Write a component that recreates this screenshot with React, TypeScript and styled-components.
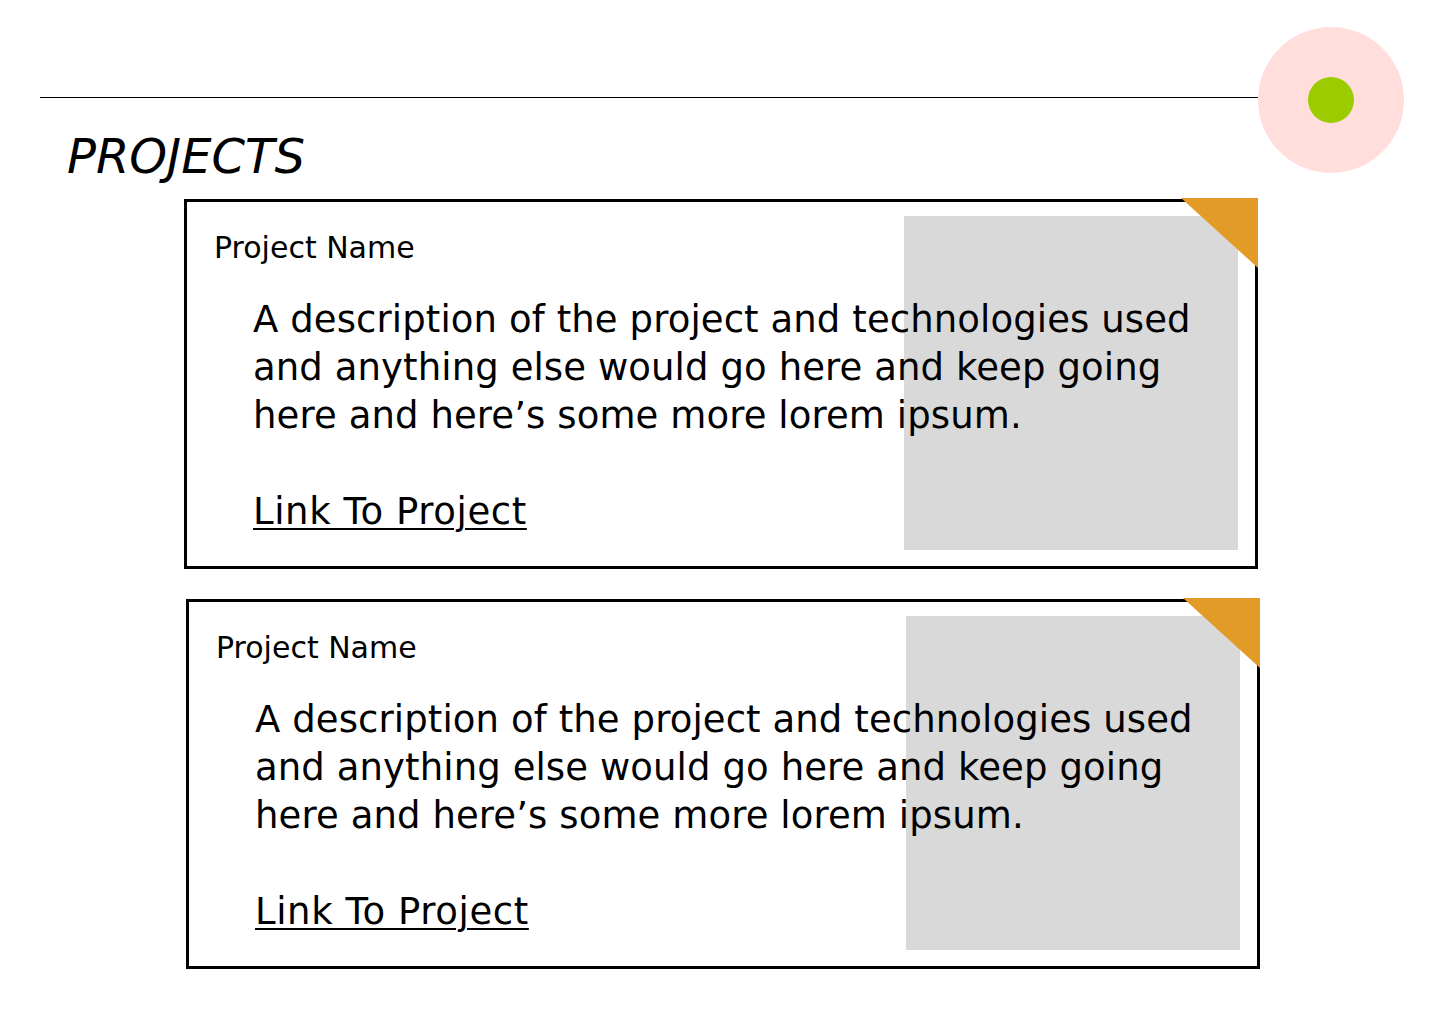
import styled, { createGlobalStyle } from "styled-components";

const GlobalStyle = createGlobalStyle`
    html, body {
        margin: 0;
        padding: 0;
        background: #ffffff;
    }
    body {
        font-family: "DejaVu Sans", "Liberation Sans", sans-serif;
        color: #000000;
    }
`;

const Page = styled.div`
    width: 1440px;
    min-height: 1024px;
    box-sizing: border-box;
    padding: 27px 36px 0 40px;
`;

const Header = styled.header`
    display: grid;
    grid-template-columns: 1fr 146px;
    align-items: start;
`;

const HeaderMain = styled.div`
    display: flex;
    flex-direction: column;
`;

const Rule = styled.hr`
    margin: 70px 0 0;
    border: none;
    height: 1px;
    background: #000000;
`;

const Title = styled.h1`
    margin: 34px 0 0 27px;
    font-size: 48px;
    line-height: 48px;
    font-style: italic;
    font-weight: 400;
`;

const Badge = styled.div`
    width: 146px;
    height: 146px;
    border-radius: 50%;
    background: #ffdedc;
    display: flex;
    align-items: center;
    justify-content: center;
`;

const Dot = styled.span`
    width: 46px;
    height: 46px;
    border-radius: 50%;
    background: #9acc00;
`;

const CardList = styled.section`
    display: flex;
    flex-direction: column;
    gap: 30px;
    margin-top: 19px;
`;

const Card = styled.article<{ $shift: number }>`
    position: relative;
    box-sizing: border-box;
    width: 1074px;
    height: 370px;
    margin-left: ${(p) => 144 + p.$shift}px;
    border: 3px solid #000000;
    padding: 28px 0 0 27px;
`;

const Preview = styled.div`
    position: absolute;
    top: 14px;
    right: 17px;
    width: 334px;
    height: 334px;
    background: #d9d9d9;
`;

const Corner = styled.div`
    position: absolute;
    top: -4px;
    right: -3px;
    width: 77px;
    height: 70px;
    background: #e39b27;
    clip-path: polygon(0 0, 100% 0, 100% 100%);
`;

const CardBody = styled.div`
    position: relative;
    display: flex;
    flex-direction: column;
`;

const Name = styled.h2`
    margin: 0;
    font-size: 30px;
    line-height: 36px;
    font-weight: 400;
`;

const Description = styled.p`
    margin: 30px 0 0 39px;
    width: 945px;
    font-size: 37px;
    line-height: 48px;
    letter-spacing: 0.1px;
`;

const ProjectLink = styled.a`
    align-self: flex-start;
    margin: 48px 0 0 39px;
    font-size: 37px;
    line-height: 48px;
    letter-spacing: 0.6px;
    color: #000000;
    text-decoration: underline;
    text-decoration-thickness: 2px;
    text-underline-offset: 4px;
`;

const projects = [
    {
        name: "Project Name",
        text: "A description of the project and technologies used and anything else would go here and keep going here and here\u2019s some more lorem ipsum.",
        shift: 0,
    },
    {
        name: "Project Name",
        text: "A description of the project and technologies used and anything else would go here and keep going here and here\u2019s some more lorem ipsum.",
        shift: 2,
    },
];

export default function App() {
    return (
        <Page>
            <GlobalStyle />
            <Header>
                <HeaderMain>
                    <Rule />
                    <Title>PROJECTS</Title>
                </HeaderMain>
                <Badge>
                    <Dot />
                </Badge>
            </Header>
            <CardList>
                {projects.map((p, i) => (
                    <Card key={i} $shift={p.shift}>
                        <Preview />
                        <Corner />
                        <CardBody>
                            <Name>{p.name}</Name>
                            <Description>{p.text}</Description>
                            <ProjectLink href="#">Link To Project</ProjectLink>
                        </CardBody>
                    </Card>
                ))}
            </CardList>
        </Page>
    );
}
